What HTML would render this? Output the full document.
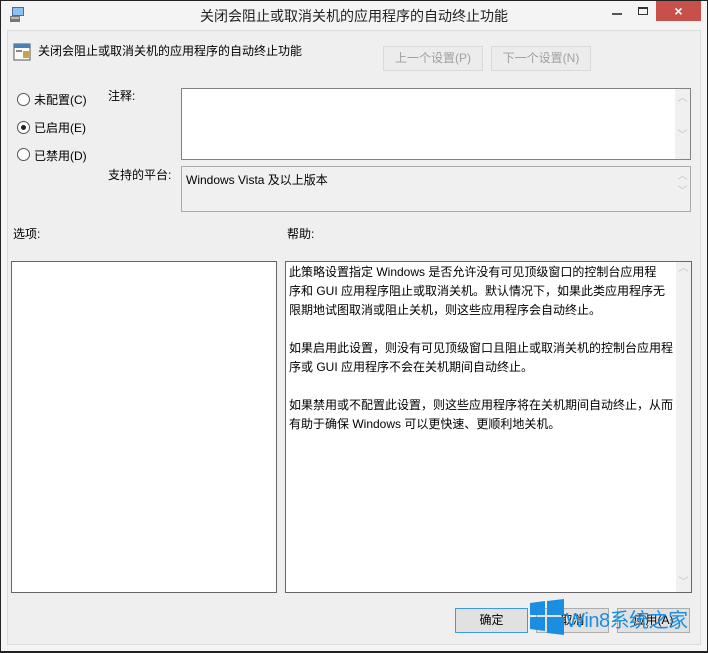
<!DOCTYPE html>
<html><head><meta charset="utf-8"><style>
*{box-sizing:border-box;margin:0;padding:0}
body{width:708px;height:653px;position:relative;background:#f4f4f4;font-family:"Liberation Sans","Noto Sans CJK SC",sans-serif;font-size:12px;color:#000;overflow:hidden}
.a{position:absolute}
.frame{left:0;top:0;width:708px;height:653px;border:1px solid #222;border-bottom-width:2px}
.inner{left:7px;top:30px;width:694px;height:615px;background:#efefef;border:1px solid #dcdcdc}
.btn{position:absolute;height:25px;border:1px solid #adadad;background:#e1e1e1;text-align:center;line-height:23px}
.dis{border-color:#d9d9d9;background:#ececec;color:#a0a0a0}
.box{position:absolute;background:#fff;border:1px solid #828282}
.radio{position:absolute;width:13px;height:13px;border:1px solid #555;border-radius:50%;background:#fff}
.sb{position:absolute;right:0;top:0;bottom:0;width:15px;background:#f0f0f0;color:#c0c0c0;font-size:10px;text-align:center}
</style></head><body>
<div class="a frame"></div>
<svg class="a" style="left:9px;top:6px" width="18" height="18"><rect x="3" y="1" width="12" height="9" fill="#3b6fb6"/><rect x="4" y="2" width="10" height="7" fill="#8ec3ef"/><rect x="1" y="10" width="10" height="6" fill="#777"/><rect x="2" y="11" width="8" height="2" fill="#bbb"/></svg>
<div class="a" style="left:0;width:708px;top:6px;text-align:center;font-size:14px;color:#222">关闭会阻止或取消关机的应用程序的自动终止功能</div>
<div class="a" style="left:612px;top:13px;width:10px;height:2px;background:#555"></div>
<div class="a" style="left:638px;top:7px;width:10px;height:8px;border:1px solid #333;border-top-width:2px"></div>
<div class="a" style="left:656px;top:1px;width:45px;height:20px;background:#c7504b;color:#fff;text-align:center;font-size:14px;line-height:20px;font-weight:bold">×</div>
<div class="a inner"></div>
<svg class="a" style="left:13px;top:43px" width="18" height="18"><rect x="1" y="1" width="16" height="16" fill="#fff" stroke="#555"/><rect x="1" y="1" width="16" height="4" fill="#4a7fb8"/><rect x="3" y="7" width="6" height="2" fill="#888"/><rect x="10" y="8" width="6" height="7" fill="#c9a24d"/></svg>
<div class="a" style="left:38px;top:42px">关闭会阻止或取消关机的应用程序的自动终止功能</div>
<div class="btn dis" style="left:383px;top:46px;width:100px">上一个设置(P)</div>
<div class="btn dis" style="left:491px;top:46px;width:100px">下一个设置(N)</div>
<div class="radio" style="left:17px;top:93px"></div><div class="a" style="left:34px;top:91px">未配置(C)</div>
<div class="radio" style="left:17px;top:121px"><div class="a" style="left:3px;top:3px;width:5px;height:5px;border-radius:50%;background:#222"></div></div><div class="a" style="left:34px;top:119px">已启用(E)</div>
<div class="radio" style="left:17px;top:148px"></div><div class="a" style="left:34px;top:147px">已禁用(D)</div>
<div class="a" style="left:108px;top:87px">注释:</div>
<div class="box" style="left:181px;top:88px;width:510px;height:72px"><div class="sb">︿<br><br><br>﹀</div></div>
<div class="a" style="left:108px;top:166px">支持的平台:</div>
<div class="box" style="left:181px;top:166px;width:510px;height:46px;background:#f0f0f0;border-color:#aaa"><div style="position:absolute;left:4px;top:4px">Windows Vista 及以上版本</div><div class="sb">︿<br>﹀</div></div>
<div class="a" style="left:13px;top:225px">选项:</div>
<div class="a" style="left:287px;top:225px">帮助:</div>
<div class="box" style="left:11px;top:261px;width:266px;height:332px;border-color:#666"></div>
<div class="box" style="left:285px;top:261px;width:407px;height:332px;border-color:#666"><div style="position:absolute;left:3px;top:1px;line-height:19px;white-space:nowrap">此策略设置指定 Windows 是否允许没有可见顶级窗口的控制台应用程<br>序和 GUI 应用程序阻止或取消关机。默认情况下，如果此类应用程序无<br>限期地试图取消或阻止关机，则这些应用程序会自动终止。<br><br>如果启用此设置，则没有可见顶级窗口且阻止或取消关机的控制台应用程<br>序或 GUI 应用程序不会在关机期间自动终止。<br><br>如果禁用或不配置此设置，则这些应用程序将在关机期间自动终止，从而<br>有助于确保 Windows 可以更快速、更顺利地关机。</div>
<div class="sb" style="line-height:14px">︿<div style="position:absolute;bottom:2px;width:15px">﹀</div></div></div>
<div class="btn" style="left:455px;top:608px;width:73px;border-color:#3c9be8">确定</div>
<div class="btn" style="left:536px;top:608px;width:73px">取消</div>
<div class="btn" style="left:617px;top:608px;width:73px">应用(A)</div>
<svg class="a" style="left:530px;top:599px" width="34" height="36"><polygon points="0,4 15,2 15,16 0,16" fill="#1a8ee0"/><polygon points="17,2 34,0 34,16 17,16" fill="#1a8ee0"/><polygon points="0,18 15,18 15,32 0,30" fill="#1a8ee0"/><polygon points="17,18 34,18 34,36 17,34" fill="#1a8ee0"/></svg>
<div class="a" style="left:566px;top:604px;font-size:20px;color:#1a8ee0;letter-spacing:-0.5px">Win8系统之家</div>
</body></html>
